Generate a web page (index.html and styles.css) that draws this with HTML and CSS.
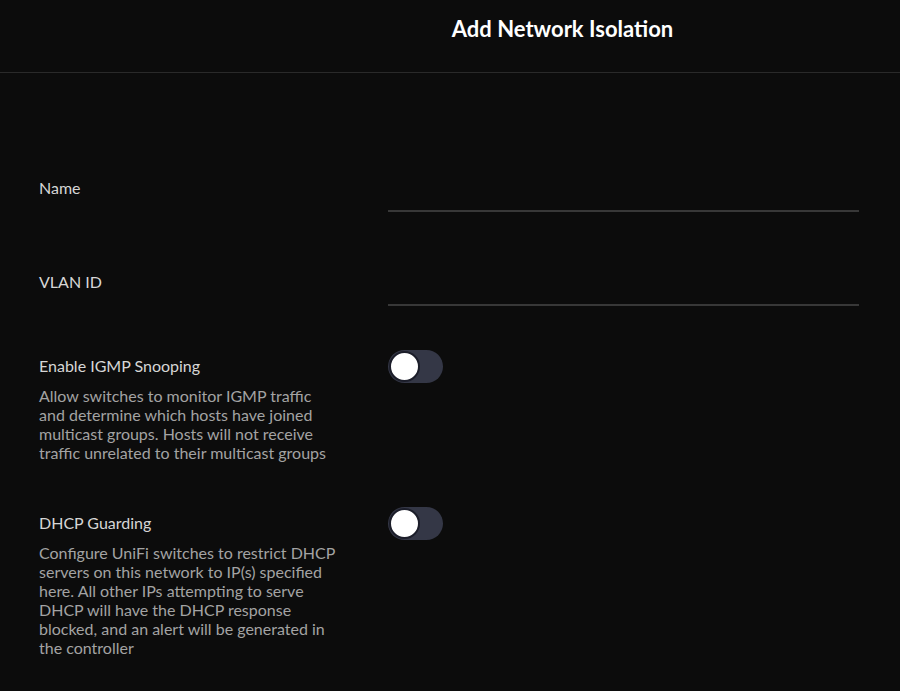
FILE: index.html
```html
<!DOCTYPE html>
<html lang="en">
<head>
<meta charset="utf-8">
<title>Add Network Isolation</title>
<link rel="stylesheet" href="styles.css">
</head>
<body>
<header class="header">
  <h1 class="title">Add Network Isolation</h1>
</header>
<form class="form">
  <div class="row field-row">
    <label class="label" for="name">Name</label>
    <input class="text-input" id="name" type="text">
  </div>
  <div class="row field-row">
    <label class="label" for="vlan">VLAN ID</label>
    <input class="text-input" id="vlan" type="text">
  </div>
  <div class="row toggle-row">
    <div class="info">
      <div class="label toggle-label">Enable IGMP Snooping</div>
      <p class="desc">Allow switches to monitor IGMP traffic and determine which hosts have joined multicast groups. Hosts will not receive traffic unrelated to their multicast groups</p>
    </div>
    <span class="toggle"><span class="knob"></span></span>
  </div>
  <div class="row toggle-row">
    <div class="info">
      <div class="label toggle-label">DHCP Guarding</div>
      <p class="desc">Configure UniFi switches to restrict DHCP servers on this network to IP(s) specified here. All other IPs attempting to serve DHCP will have the DHCP response blocked, and an alert will be generated in the controller</p>
    </div>
    <span class="toggle"><span class="knob"></span></span>
  </div>
</form>
</body>
</html>
```
FILE: styles.css
```css
* { box-sizing: border-box; }
html, body {
  margin: 0;
  background: #0c0c0c;
  font-family: Lato, "Open Sans", sans-serif;
  color: #d9d9d9;
}
body { min-height: 691px; }
.header {
  height: 73px;
  border-bottom: 1px solid #2a2a2a;
  display: flex;
  justify-content: center;
  align-items: center;
  padding-left: 225px;
  padding-bottom: 16px;
}
.title {
  margin: 0;
  font-size: 22px;
  font-weight: 700;
  color: #ffffff;
}
.form {
  padding: 91px 41px 0 39px;
  display: flex;
  flex-direction: column;
  gap: 46px;
}
.row {
  display: grid;
  grid-template-columns: 349px 1fr;
}
.field-row { align-items: center; }
.label {
  font-size: 16px;
  font-weight: 400;
  line-height: 20px;
  color: #d6d6d6;
}
.text-input {
  height: 48px;
  background: transparent;
  border: none;
  border-bottom: 2px solid #383838;
  color: #fff;
  font: inherit;
  outline: none;
  padding: 0;
  width: 100%;
}
.toggle-row { align-items: start; margin-top: -2px; }
.toggle-row + .toggle-row { margin-top: -1px; }
.toggle-label { line-height: 32px; }
.desc {
  margin: 4px 0 0;
  max-width: 299px;
  font-size: 16px;
  line-height: 19px;
  color: #a3a3a3;
}
.toggle {
  width: 55px;
  height: 33px;
  border-radius: 17px;
  background: #343746;
  display: flex;
  align-items: center;
  padding-left: 1px;
}
.knob {
  width: 31px;
  height: 31px;
  border-radius: 50%;
  background: #ffffff;
  border: 2px solid #1c1e2a;
}
```
